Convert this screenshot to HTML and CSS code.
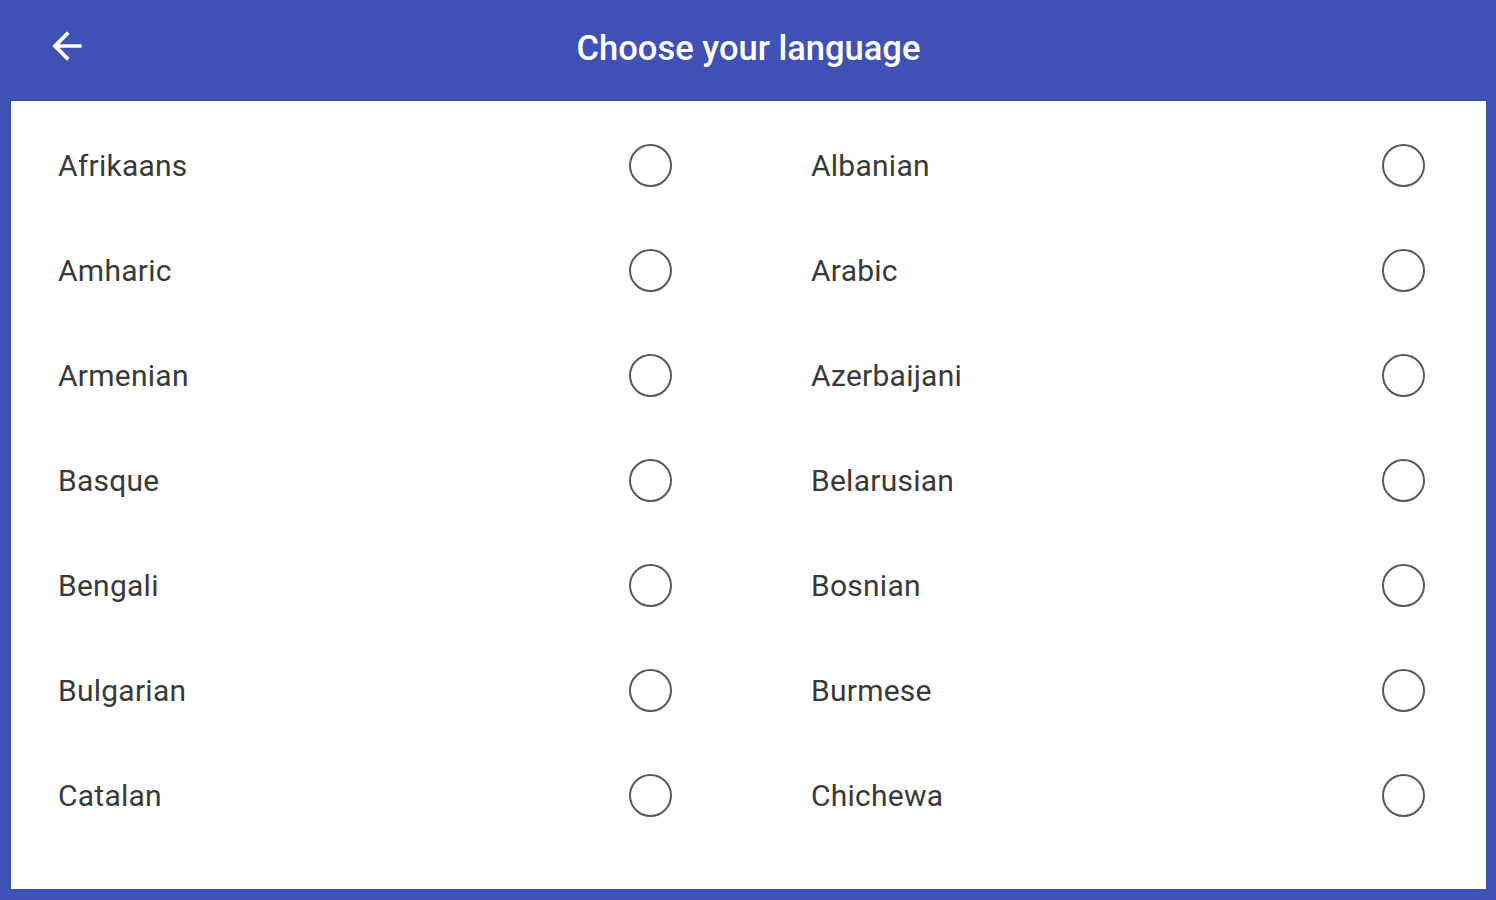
FILE: index.html
```html
<!DOCTYPE html>
<html>
<head>
<meta charset="utf-8">
<link rel="stylesheet" href="styles.css">
</head>
<body>
<div class="app">
  <header class="topbar">
    <button class="back" aria-label="Back">
      <svg viewBox="0 0 24 24" width="44" height="44"><path d="M20 11H7.830l5.590-5.590L12 4l-8 8 8 8 1.410-1.410L7.830 13H20v-2z" fill="#fff"/></svg>
    </button>
    <h1 class="title">Choose your language</h1>
  </header>
  <main class="panel">
    <ul class="langs">
      <li class="lang"><span class="name">Afrikaans</span><span class="radio"></span></li>
      <li class="lang"><span class="name">Albanian</span><span class="radio"></span></li>
      <li class="lang"><span class="name">Amharic</span><span class="radio"></span></li>
      <li class="lang"><span class="name">Arabic</span><span class="radio"></span></li>
      <li class="lang"><span class="name">Armenian</span><span class="radio"></span></li>
      <li class="lang"><span class="name">Azerbaijani</span><span class="radio"></span></li>
      <li class="lang"><span class="name">Basque</span><span class="radio"></span></li>
      <li class="lang"><span class="name">Belarusian</span><span class="radio"></span></li>
      <li class="lang"><span class="name">Bengali</span><span class="radio"></span></li>
      <li class="lang"><span class="name">Bosnian</span><span class="radio"></span></li>
      <li class="lang"><span class="name">Bulgarian</span><span class="radio"></span></li>
      <li class="lang"><span class="name">Burmese</span><span class="radio"></span></li>
      <li class="lang"><span class="name">Catalan</span><span class="radio"></span></li>
      <li class="lang"><span class="name">Chichewa</span><span class="radio"></span></li>
    </ul>
  </main>
</div>
</body>
</html>
```
FILE: styles.css
```css
* { box-sizing: border-box; }
html, body { margin: 0; padding: 0; }
body {
  width: 1496px;
  height: 900px;
  background: #3f51b5;
  font-family: Roboto, "Liberation Sans", sans-serif;
  overflow: hidden;
}
.app {
  display: flex;
  flex-direction: column;
  height: 900px;
  padding: 0 10px 11px 11px;
}
.topbar {
  height: 101px;
  display: flex;
  align-items: center;
  position: relative;
  justify-content: center;
}
.back {
  position: absolute;
  left: 34px;
  top: 24px;
  width: 44px;
  height: 44px;
  padding: 0;
  border: 0;
  background: transparent;
  display: flex;
}
.title {
  margin: 0 0 6px 0;
  color: #fff;
  font-size: 34.5px;
  font-weight: 500;
  letter-spacing: 0;
}
.panel {
  flex: 1;
  background: #fff;
  padding: 12px 61px 0 47px;
  box-shadow: 0 -1px 2px rgba(0,0,0,0.15);
}
.langs {
  list-style: none;
  margin: 0;
  padding: 0;
  display: grid;
  grid-template-columns: 614px 614px;
  column-gap: 139px;
  grid-auto-rows: 105px;
}
.lang {
  display: flex;
  align-items: center;
  justify-content: space-between;
}
.name {
  font-size: 30px;
  color: #3a3a3a;
  letter-spacing: 0.25px;
}
.radio {
  width: 43px;
  height: 43px;
  border: 2.5px solid #5a5a5a;
  border-radius: 50%;
}
```
